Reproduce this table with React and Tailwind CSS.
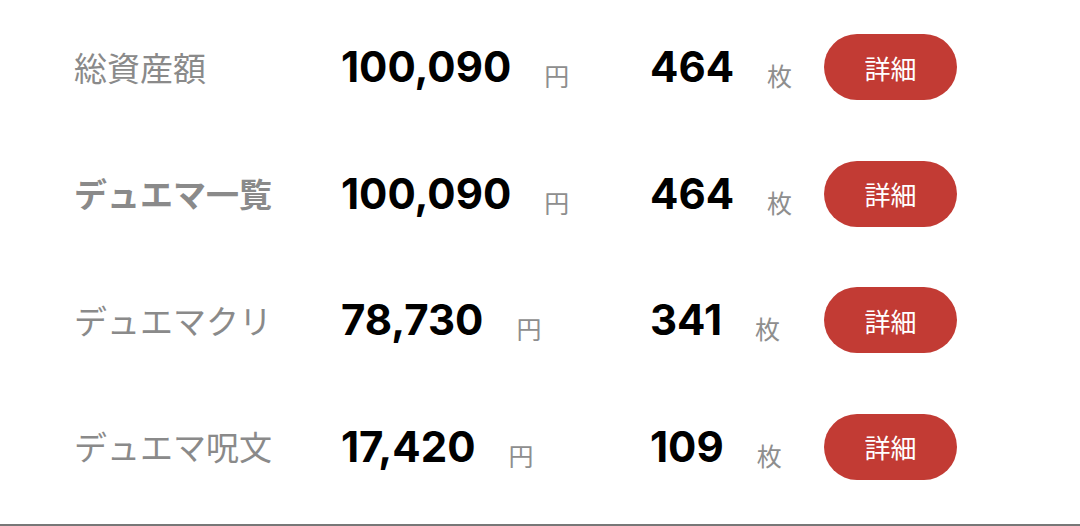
export default function App() {
  const rows = [
    { label: "総資産額", bold: false, yen: "100,090", count: "464" },
    { label: "デュエマ一覧", bold: true, yen: "100,090", count: "464" },
    { label: "デュエマクリ", bold: false, yen: "78,730", count: "341" },
    { label: "デュエマ呪文", bold: false, yen: "17,420", count: "109" },
  ];
  const jp = { fontFamily: '"Noto Sans CJK JP", "Noto Sans", sans-serif' };
  const num = { fontFamily: 'Inter, "Liberation Sans", sans-serif' };
  return (
    <div className="w-[1080px] h-[526px] bg-white flex flex-col overflow-hidden">
      <div className="flex flex-col pt-[4px] flex-1">
        {rows.map((r, i) => (
          <div key={i} className="h-[126.5px] flex items-center">
            <div
              className={`w-[341px] pl-[74px] text-[33px] leading-none text-[#8a8a8a] ${r.bold ? "font-bold" : "font-normal"}`}
              style={jp}
            >
              {r.label}
            </div>
            <div className="w-[309px] flex items-baseline">
              <span className="text-[42px] font-bold leading-none text-black" style={num}>
                {r.yen}
              </span>
              <span className="ml-[33px] text-[25px] leading-none text-[#8e8e8e] relative top-[4px]" style={jp}>
                円
              </span>
            </div>
            <div className="w-[174px] flex items-baseline">
              <span className="text-[42px] font-bold leading-none text-black" style={num}>
                {r.count}
              </span>
              <span className="ml-[33px] text-[25px] leading-none text-[#8e8e8e] relative top-[4px]" style={jp}>
                枚
              </span>
            </div>
            <button
              className="w-[133px] h-[66px] rounded-full bg-[#c23b34] text-white text-[26px] flex items-center justify-center"
              style={jp}
            >
              詳細
            </button>
          </div>
        ))}
      </div>
      <div className="h-[2px] bg-[#777777]" />
    </div>
  );
}
